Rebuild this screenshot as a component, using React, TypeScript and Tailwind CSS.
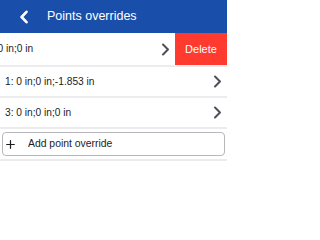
import { Plus } from 'lucide-react';

function Chevron({ className }: { className?: string }) {
  return (
    <svg className={className} width="9" height="13" viewBox="0 0 9 13" fill="none">
      <path d="M2 1.5L7 6.5L2 11.5" stroke="currentColor" strokeWidth={2} strokeLinecap="round" strokeLinejoin="round" />
    </svg>
  );
}

const rows = ['1: 0 in;0 in;-1.853 in', '3: 0 in;0 in;0 in'];

export default function App() {
  return (
    <div className="w-[227px] h-[206px] bg-white overflow-hidden font-['Liberation_Sans',Arial,sans-serif]">
      {/* Header */}
      <div className="h-[33px] bg-[#1a4eab] flex items-center">
        <svg className="ml-[19px]" width="10" height="14" viewBox="0 0 10 14" fill="none">
          <path d="M7.5 1.8L2.6 7L7.5 12.2" stroke="white" strokeWidth={2.6} strokeLinecap="round" strokeLinejoin="round" />
        </svg>
        <span className="ml-[18px] text-white text-[12.5px] font-medium">Points overrides</span>
      </div>

      {/* Swiped row */}
      <div className="relative h-[34px] border-b-2 border-[#ececee] overflow-hidden">
        <div className="absolute top-0 left-[-52px] w-[227px] h-[32px] flex items-center">
          <span className="ml-[19px] text-[10.2px] text-[#1c1c1e] whitespace-nowrap">0: 0 in;0 in;0 in</span>
          <Chevron className="ml-auto mr-[5px] text-[#4b5058]" />
        </div>
        <div className="absolute top-0 right-0 w-[52px] h-[32px] bg-[#ff3b30] flex items-center justify-center">
          <span className="text-white text-[11px]">Delete</span>
        </div>
      </div>

      {rows.map((r) => (
        <div key={r} className="h-[31px] border-b-2 border-[#ececee] flex items-center">
          <span className="ml-[5px] text-[10.2px] text-[#1c1c1e]">{r}</span>
          <Chevron className="ml-auto mr-[5px] text-[#4b5058]" />
        </div>
      ))}

      {/* Add button */}
      <div className="pt-[3px] pb-[3px] px-[2px] border-b-2 border-[#ececee]">
        <div className="h-[24px] border border-[#b8b8bc] rounded-[4px] flex items-center">
          <Plus className="ml-[1px] text-[#1c1c1e]" size={13} strokeWidth={2.2} />
          <span className="ml-[11px] text-[10.4px] text-[#1c1c1e]">Add point override</span>
        </div>
      </div>
    </div>
  );
}
